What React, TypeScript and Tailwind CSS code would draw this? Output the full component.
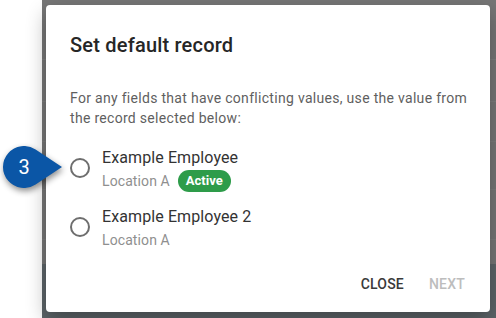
import React from 'react';

const records = [
  { id: 1, name: 'Example Employee', location: 'Location A', active: true },
  { id: 2, name: 'Example Employee 2', location: 'Location A', active: false },
];

const Callout: React.FC = () => (
  <div className="absolute left-0 top-[140px] w-[66px] h-[54px]">
    <svg width="66" height="54" viewBox="0 0 66 54" className="absolute inset-0 drop-shadow-[1px_3px_3px_rgba(0,0,0,0.45)]">
      <path d="M62 27 L35.6 9.5 A21 21 0 1 0 35.6 44.5 Z" fill="#0b56a6" />
    </svg>
    <span className="absolute left-[3px] top-[6px] w-[42px] h-[42px] flex items-center justify-center text-white text-[20px]">3</span>
  </div>
);

export default function App() {
  return (
    <div className="relative w-[496px] h-[318px] flex bg-white overflow-hidden font-['Roboto',sans-serif]">
      <div className="w-[42px] shrink-0" />
      <div className="relative flex-1 bg-[#767676]">
        {/* dimmed page behind the dialog */}
        <div className="absolute inset-0 flex flex-col">
          <div className="h-[60px] border-b border-[#7e7e7e]" />
          <div className="h-[42px] border-b border-[#7e7e7e]" />
          <div className="h-[40px] border-b border-[#7c7c7c]" />
          <div className="h-[48px] border-b border-[#7c7c7c]" />
          <div className="h-[50px] border-b border-[#7c7c7c]" />
          <div className="h-[24px]" />
          <div className="flex-1 bg-[#5d6569]" />
        </div>

        <div className="relative ml-1 mt-[5px] w-[444px] h-[307px] bg-white rounded flex flex-col shadow-[0_8px_20px_rgba(0,0,0,0.3)]">
          <h2 className="pt-6 px-6 text-[20px] leading-8 font-medium tracking-[0.2px] text-[#262626]">Set default record</h2>
          <p className="mt-[27px] pl-6 pr-2 text-[14px] leading-5 tracking-[0.3px] text-[#5f5f5f] whitespace-nowrap">
            For any fields that have conflicting values, use the value from
            <br />
            the record selected below:
          </p>

          <div className="mt-[18px] pl-6 flex flex-col gap-[13px]">
            {records.map(r => (
              <label key={r.id} className="flex items-center">
                <span className="w-5 h-5 rounded-full border-2 border-[#6e6e6e] -mt-[2px] shrink-0" />
                <span className="ml-[12px] flex flex-col">
                  <span className="text-[16px] leading-6 tracking-[0.1px] text-[#333333]">{r.name}</span>
                  <span className="h-[22px] flex items-center gap-[8px]">
                    <span className="text-[14px] tracking-[0.1px] text-[#8f8f8f]">{r.location}</span>
                    {r.active && (
                      <span className="h-[22px] px-[8px] rounded-full bg-[#2e9c4a] text-white text-[13px] font-bold flex items-center">
                        Active
                      </span>
                    )}
                  </span>
                </span>
              </label>
            ))}
          </div>

          <div className="mt-auto mb-[16px] pr-[25px] flex justify-end gap-[25px] text-[14px] font-medium tracking-[0.2px] leading-6">
            <button className="text-[#3a3a3a]">CLOSE</button>
            <button className="text-[#bdbdbd]">NEXT</button>
          </div>
        </div>
      </div>
      <Callout />
    </div>
  );
}
